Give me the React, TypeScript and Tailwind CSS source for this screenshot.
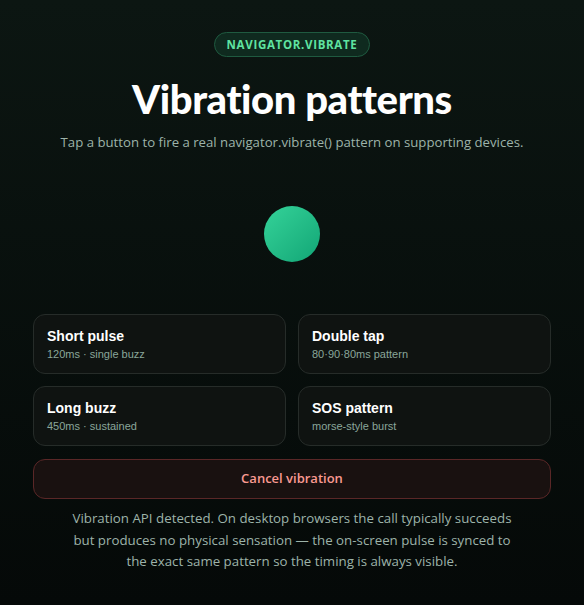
import React from "react";

const patterns = [
  { title: "Short pulse", sub: "120ms · single buzz" },
  { title: "Double tap", sub: "80·90·80ms pattern" },
  { title: "Long buzz", sub: "450ms · sustained" },
  { title: "SOS pattern", sub: "morse-style burst" },
];

export default function App() {
  return (
    <div
      className="min-h-[605px] w-full bg-gradient-to-b from-[#0c1612] to-[#050908] flex flex-col items-center px-[33px] pt-[32px] pb-8"
      style={{ fontFamily: '"Open Sans", "Noto Sans", sans-serif' }}
    >
      <div className="h-[25px] px-[12px] rounded-full border border-[#1f5a40] bg-[#0f2a1f] flex items-center text-[11.5px] font-bold tracking-[0.06em] text-[#5fe3a1]">
        NAVIGATOR.VIBRATE
      </div>
      <h1
        className="mt-[19px] text-[40px] leading-[46px] text-white tracking-[-0.01em]"
        style={{ fontFamily: '"Lato", "Open Sans", sans-serif', fontWeight: 900 }}
      >
        Vibration patterns
      </h1>
      <p className="mt-[10px] text-[13.2px] leading-[20px] text-[#9db3a9]">
        Tap a button to fire a real navigator.vibrate() pattern on supporting devices.
      </p>
      <div className="mt-[54px] h-[56px] w-[56px] rounded-full bg-gradient-to-br from-[#34d399] to-[#10a676]" />
      <div className="mt-[52px] w-full grid grid-cols-2 gap-[12px]">
        {patterns.map((p) => (
          <button
            key={p.title}
            className="h-[60px] rounded-[12px] border border-[#262c29] bg-[#0f1311] text-left px-[13px] flex flex-col justify-center"
            style={{ fontFamily: '"Liberation Sans", Arial, sans-serif' }}
          >
            <span className="text-[14px] leading-[18px] font-bold text-white">{p.title}</span>
            <span className="mt-[2px] text-[11px] leading-[14px] text-[#8aa69a]">{p.sub}</span>
          </button>
        ))}
      </div>
      <button className="mt-[13px] w-full h-[40px] rounded-[12px] border border-[#5a2727] bg-[#191110] text-[13px] font-semibold text-[#f99a92]">
        Cancel vibration
      </button>
      <p className="mt-[9px] max-w-[450px] text-center text-[13.3px] leading-[21.5px] text-[#9db3a9]">
        Vibration API detected. On desktop browsers the call typically succeeds but produces no physical sensation — the on-screen pulse is synced to the exact same pattern so the timing is always visible.
      </p>
    </div>
  );
}
